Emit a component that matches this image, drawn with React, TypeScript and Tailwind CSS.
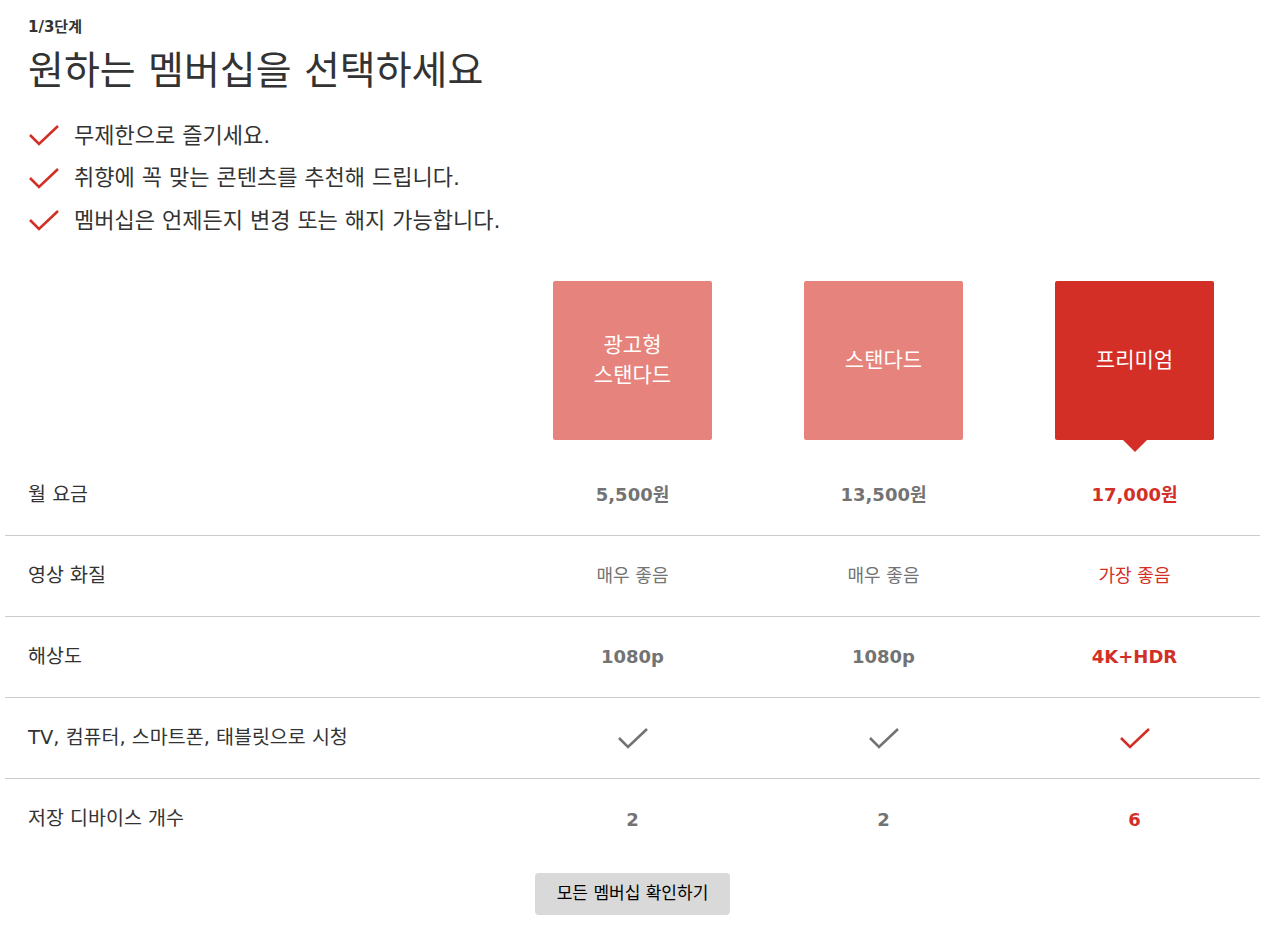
import React from "react";

const font = { fontFamily: '"DejaVu Sans", "Noto Sans CJK KR", sans-serif' };

function Check({ color, size = 32 }: { color: string; size?: number }) {
  return (
    <svg width={size} height={size * 0.75} viewBox="0 0 32 24" fill="none">
      <path d="M2 12 L11 21 L30 3" stroke={color} strokeWidth="2.6" strokeLinecap="butt" strokeLinejoin="miter" />
    </svg>
  );
}

const plans = [
  { name: ["광고형", "스탠다드"], price: "5,500원", quality: "매우 좋음", res: "1080p", dev: "2", active: false },
  { name: ["스탠다드"], price: "13,500원", quality: "매우 좋음", res: "1080p", dev: "2", active: false },
  { name: ["프리미엄"], price: "17,000원", quality: "가장 좋음", res: "4K+HDR", dev: "6", active: true },
];

function Row({ label, children, last = false }: { label: string; children: React.ReactNode; last?: boolean }) {
  return (
    <div className={`grid grid-cols-[40%_20%_20%_20%] h-[81px] items-center ${last ? "" : "border-b border-[#cccccc]"}`}>
      <div className="pl-[23px] text-[19.5px] text-[#333333]">{label}</div>
      {children}
    </div>
  );
}

export default function App() {
  return (
    <div className="bg-white min-h-[925px] pl-[5px] pr-[20px]" style={font}>
      <div className="px-[23px] pt-[17px]">
        <div className="text-[15px] font-bold text-[#333333] leading-[20px]">1/3단계</div>
        <h1 className="text-[39px] text-[#333333] leading-[48px] mt-[10px]">원하는 멤버십을 선택하세요</h1>
        <ul className="mt-[19px] flex flex-col">
          {["무제한으로 즐기세요.", "취향에 꼭 맞는 콘텐츠를 추천해 드립니다.", "멤버십은 언제든지 변경 또는 해지 가능합니다."].map((t) => (
            <li key={t} className="flex items-center h-[42.5px]">
              <Check color="#d22f27" size={32} />
              <span className="ml-[14px] text-[22px] text-[#333333]">{t}</span>
            </li>
          ))}
        </ul>
      </div>

      <div className="mt-[39px]">
        <div className="grid grid-cols-[40%_20%_20%_20%] h-[174px]">
          <div />
          {plans.map((p, i) => (
            <div key={i} className="flex justify-center">
              <div className="relative h-[159px]">
                <div
                  className={`w-[159px] h-[159px] rounded-[2px] flex flex-col items-center justify-center text-white text-[21px] leading-[30px] ${
                    p.active ? "bg-[#d32f27]" : "bg-[#e5837c]"
                  }`}
                >
                  {p.name.map((n) => (
                    <span key={n}>{n}</span>
                  ))}
                </div>
                {p.active && (
                  <div className="absolute left-1/2 -translate-x-1/2 top-[158px] w-0 h-0 border-l-[13px] border-r-[13px] border-t-[13px] border-l-transparent border-r-transparent border-t-[#d32f27]" />
                )}
              </div>
            </div>
          ))}
        </div>

        <Row label="월 요금">
          {plans.map((p, i) => (
            <div key={i} className={`text-center text-[18px] font-bold ${p.active ? "text-[#d22f27]" : "text-[#737373]"}`}>{p.price}</div>
          ))}
        </Row>
        <Row label="영상 화질">
          {plans.map((p, i) => (
            <div key={i} className={`text-center text-[18px] ${p.active ? "text-[#d22f27]" : "text-[#737373]"}`}>{p.quality}</div>
          ))}
        </Row>
        <Row label="해상도">
          {plans.map((p, i) => (
            <div key={i} className={`text-center text-[18px] font-bold ${p.active ? "text-[#d22f27]" : "text-[#737373]"}`}>{p.res}</div>
          ))}
        </Row>
        <Row label="TV, 컴퓨터, 스마트폰, 태블릿으로 시청">
          {plans.map((p, i) => (
            <div key={i} className="flex justify-center">
              <Check color={p.active ? "#d22f27" : "#737373"} size={32} />
            </div>
          ))}
        </Row>
        <Row label="저장 디바이스 개수" last>
          {plans.map((p, i) => (
            <div key={i} className={`text-center text-[18px] font-bold ${p.active ? "text-[#d22f27]" : "text-[#737373]"}`}>{p.dev}</div>
          ))}
        </Row>

        <div className="flex justify-center mt-[13px]">
          <button className="h-[42px] w-[195px] rounded-[4px] bg-[#d9d9d9] text-[17px] text-black">모든 멤버십 확인하기</button>
        </div>
      </div>
    </div>
  );
}
